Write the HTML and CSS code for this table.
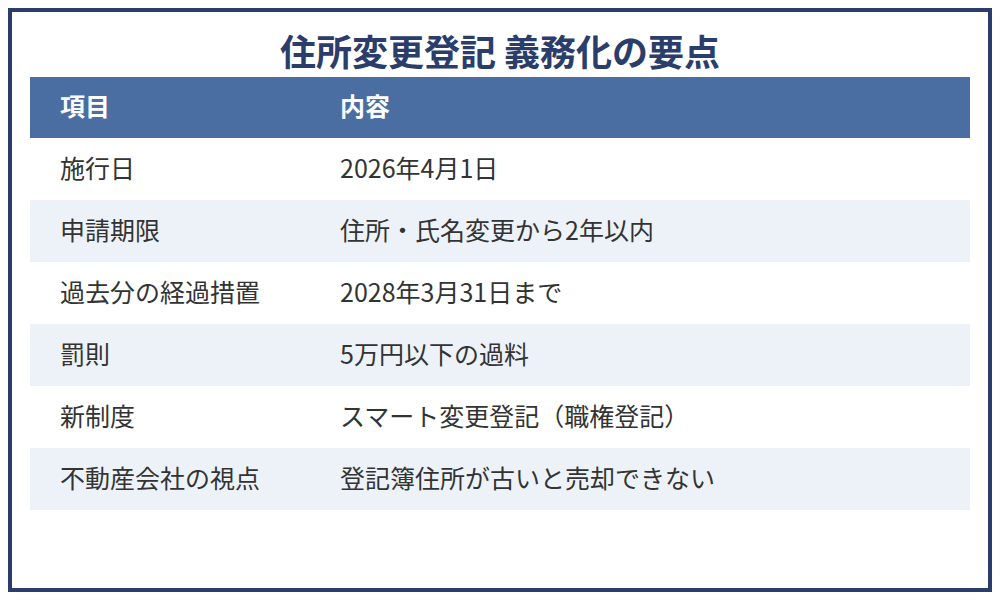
FILE: index.html
```html
<!DOCTYPE html>
<html lang="ja">
<head>
<meta charset="utf-8">
<link rel="stylesheet" href="styles.css">
</head>
<body>
<div class="card">
  <h1 class="title">住所変更登記 義務化の要点</h1>
  <table class="tbl">
    <thead>
      <tr><th class="c1">項目</th><th>内容</th></tr>
    </thead>
    <tbody>
      <tr><td class="c1">施行日</td><td>2026年4月1日</td></tr>
      <tr class="alt"><td class="c1">申請期限</td><td>住所・氏名変更から2年以内</td></tr>
      <tr><td class="c1">過去分の経過措置</td><td>2028年3月31日まで</td></tr>
      <tr class="alt"><td class="c1">罰則</td><td>5万円以下の過料</td></tr>
      <tr><td class="c1">新制度</td><td>スマート変更登記（職権登記）</td></tr>
      <tr class="alt"><td class="c1">不動産会社の視点</td><td>登記簿住所が古いと売却できない</td></tr>
    </tbody>
  </table>
</div>
</body>
</html>
```
FILE: styles.css
```css
html, body {
  margin: 0;
  padding: 0;
  background: #ffffff;
}
body {
  padding: 8px;
  font-family: "Noto Sans CJK JP", "Noto Sans", sans-serif;
}
.card {
  box-sizing: border-box;
  width: 984px;
  height: 584px;
  border: 4px solid #2b3d6b;
  padding: 16px 18px 0 18px;
  background: #ffffff;
}
.title {
  margin: 0 0 5px 0;
  text-align: center;
  font-size: 36px;
  line-height: 44px;
  font-weight: 700;
  color: #2b3d6b;
}
.tbl {
  width: 940px;
  border-collapse: collapse;
  font-size: 25px;
  color: #333333;
}
.tbl th {
  box-sizing: border-box;
  background: #4a6ea2;
  color: #ffffff;
  font-weight: 700;
  text-align: left;
  height: 61px;
  padding: 0 30px 5px 30px;
  line-height: 30px;
}
.tbl td {
  box-sizing: border-box;
  height: 62px;
  padding: 0 30px 4px 30px;
  line-height: 30px;
}
.tbl .c1 {
  width: 280px;
}
.tbl tr.alt td {
  background: #edf2f8;
}
```
